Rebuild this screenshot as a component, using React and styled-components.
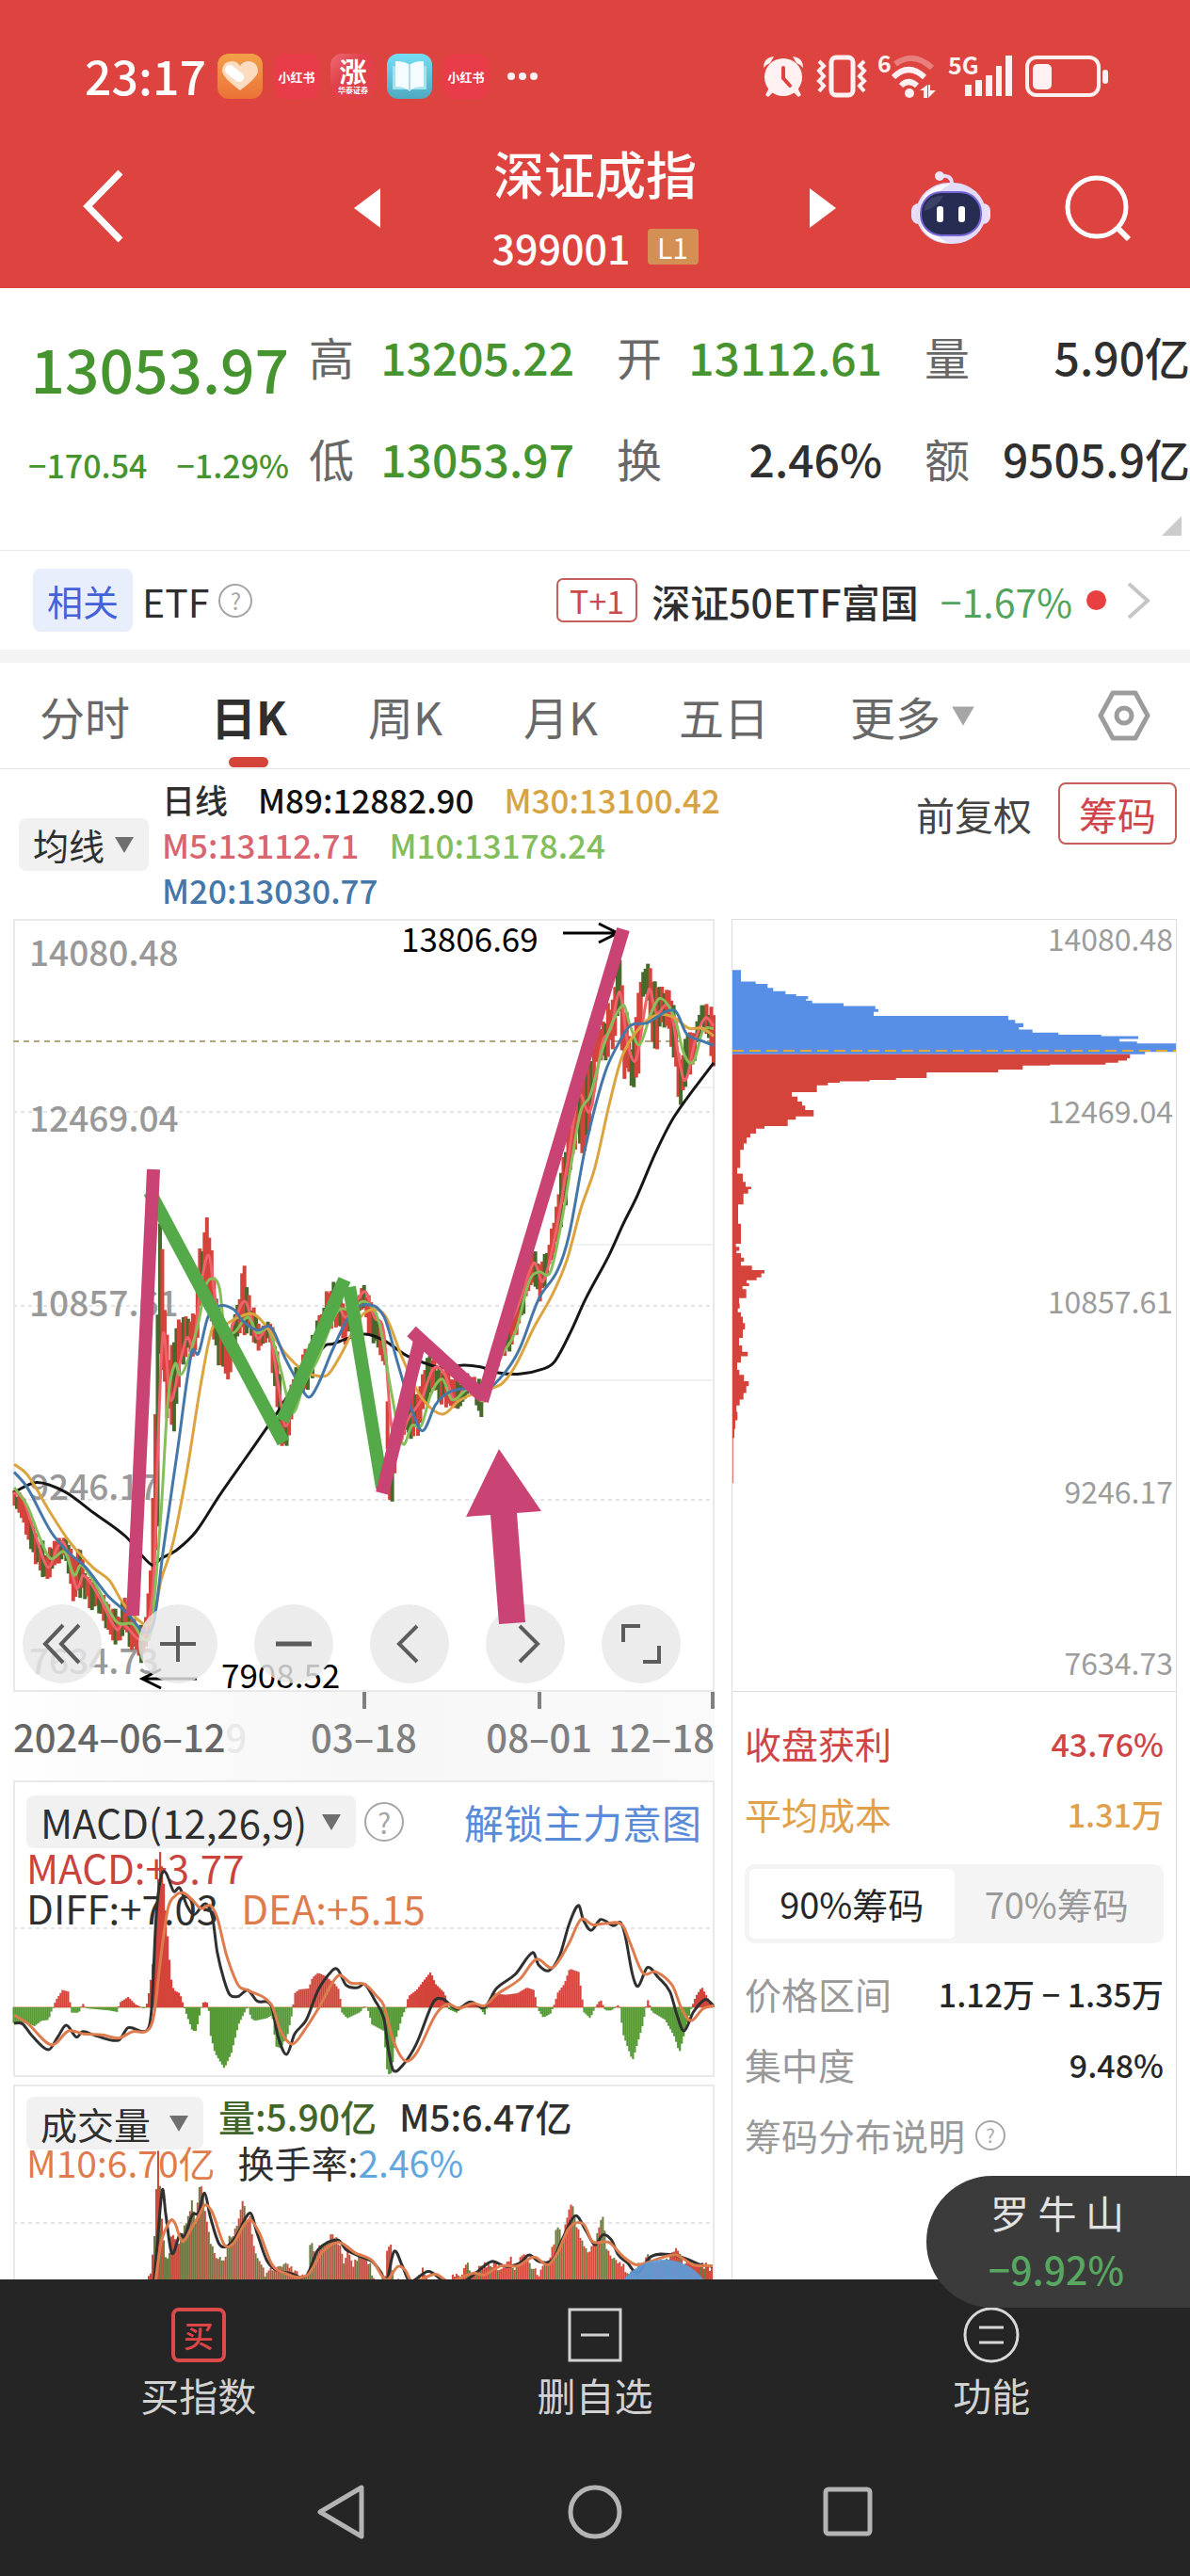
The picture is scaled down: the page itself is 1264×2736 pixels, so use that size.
import { useState } from "react";
import styled, { createGlobalStyle } from "styled-components";

const GlobalStyle = createGlobalStyle`
  * { box-sizing: border-box; }
  body {
    margin: 0;
    background: #fff;
    color: #2f2f2f;
    font-family: "Noto Sans CJK SC", "Noto Sans", sans-serif;
  }
  button, select {
    margin: 0;
    padding: 0;
    border: 0;
    background: none;
    color: inherit;
    font: inherit;
    cursor: pointer;
  }
  a { text-decoration: none; color: inherit; }
  svg { display: block; flex: none; overflow: visible; }
  dl, dt, dd, h1, p { margin: 0; }
`;

const Page = styled.div`
  display: flex;
  flex-direction: column;
  min-height: 100vh;
`;

/* header */

const Header = styled.header`
  background: #dd433f;
  color: #fff;
`;

const StatusBar = styled.div`
  display: flex;
  align-items: center;
  justify-content: space-between;
  height: 136px;
  padding: 26px 86px 0 90px;
`;

const StatusGroup = styled.div`
  display: flex;
  align-items: center;
  gap: ${(props) => props.gap}px;
`;

const Clock = styled.span`
  font-size: 50px;
  line-height: 52px;
  font-weight: 500;
  padding-bottom: 4px;
`;

const AppIcon = styled.span`
  display: flex;
  flex-direction: column;
  align-items: center;
  justify-content: center;
  width: 48px;
  height: 48px;
  border-radius: 12px;
  background: ${(props) => props.bg};
  font-size: ${(props) => props.size || 13}px;
  line-height: 1;
  font-weight: 700;
  white-space: nowrap;
`;

const Tiny = styled.small`
  font-size: 8px;
  line-height: 12px;
`;

const TitleBar = styled.div`
  display: grid;
  grid-template-columns: 1fr 512px 1fr;
  align-items: center;
  height: 170px;
`;

const BackButton = styled.button`
  justify-self: start;
  margin-left: 88px;
`;

const TitleGroup = styled.div`
  display: flex;
  align-items: center;
  justify-content: space-between;
`;

const TitleText = styled.div`
  text-align: center;
`;

const Title = styled.h1`
  font-size: 54px;
  line-height: 60px;
  font-weight: 500;
`;

const Code = styled.p`
  display: flex;
  align-items: center;
  justify-content: space-between;
  gap: 18px;
  margin-top: 22px;
  font-size: 43px;
  line-height: 52px;
  font-weight: 500;
`;

const Level = styled.span`
  width: 54px;
  border-radius: 4px;
  background: #d48f55;
  font-size: 30px;
  line-height: 38px;
  font-weight: 400;
  text-align: center;
`;

const HeaderTools = styled.div`
  display: flex;
  align-items: center;
  justify-content: flex-end;
  gap: 76px;
  padding-right: 60px;
`;

/* quote */

const Quote = styled.section`
  position: relative;
  display: grid;
  grid-template-columns: 310px 1fr;
  gap: 18px;
  height: 279px;
  border-bottom: 1px solid #e9e9e9;
`;

const Last = styled.div`
  padding: 44px 3px 0 30px;
  color: #46942f;
`;

const Price = styled.div`
  font-size: 64px;
  line-height: 80px;
  font-weight: 500;
  text-align: right;
`;

const Change = styled.div`
  display: flex;
  justify-content: space-between;
  margin-top: 36px;
  font-size: 34px;
  line-height: 56px;
  font-weight: 500;
`;

const Figures = styled.dl`
  display: grid;
  grid-template-columns: repeat(3, 1fr);
  grid-auto-rows: 108px;
  column-gap: 45px;
  padding-top: 18px;
`;

const Figure = styled.div`
  display: flex;
  align-items: center;
  justify-content: space-between;
  font-size: 48px;
  line-height: 60px;
  white-space: nowrap;
  dt { color: #686868; }
  dd {
    font-weight: 500;
    color: ${(props) => (props.down ? "#46942f" : "#2f2f2f")};
  }
`;

const Corner = styled.span`
  position: absolute;
  right: 9px;
  bottom: 15px;
  border-left: 21px solid transparent;
  border-bottom: 21px solid #ccc;
`;

const Related = styled.section`
  display: flex;
  align-items: center;
  justify-content: space-between;
  height: 105px;
  padding: 0 42px 0 35px;
  font-size: 41px;
  line-height: 50px;
`;

const Inline = styled.div`
  display: flex;
  align-items: ${(props) => props.align || "center"};
  gap: ${(props) => props.gap}px;
`;

const RelatedTag = styled.span`
  padding: 0 15px;
  border-radius: 8px;
  background: #e9eefd;
  color: #4462d8;
  font-size: 38px;
  line-height: 67px;
`;

const HelpButton = styled.button`
  flex: none;
  width: ${(props) => props.size}px;
  height: ${(props) => props.size}px;
  border: 2px solid #a6a6a6;
  border-radius: 50%;
  color: #a6a6a6;
  font-size: ${(props) => props.size - 12}px;
  line-height: ${(props) => props.size - 6}px;
  text-align: center;
`;

const FundLink = styled.a`
  display: flex;
  align-items: center;
  gap: 15px;
  font-weight: 500;
`;

const Settle = styled.span`
  padding: 0 12px;
  border: 2px solid #c4605c;
  border-radius: 7px;
  color: #cc4a4a;
  font-size: 34px;
  line-height: 43px;
  font-weight: 400;
`;

const FundChange = styled.span`
  margin-left: 8px;
  color: #52a35d;
  font-weight: 400;
`;

const Dot = styled.span`
  width: 21px;
  height: 21px;
  margin-right: 6px;
  border-radius: 50%;
  background: #e84040;
`;

/* periods */

const Periods = styled.nav`
  display: flex;
  align-items: center;
  gap: 86px;
  height: 127px;
  padding: 0 42px;
  border-top: 14px solid #f4f4f4;
  border-bottom: 1px solid #e4e4e4;
  color: #686868;
  font-size: 48px;
  line-height: 110px;
`;

const Period = styled.button`
  position: relative;
  color: ${(props) => (props.active ? "#2f2f2f" : "#686868")};
  font-weight: ${(props) => (props.active ? 700 : 400)};
  &::after {
    content: "";
    position: absolute;
    left: 50%;
    bottom: 0;
    width: 42px;
    height: 11px;
    margin-left: -21px;
    border-radius: 6px;
    background: ${(props) => (props.active ? "#d4443b" : "none")};
  }
`;

const PickerBox = styled.label`
  display: inline-flex;
  align-items: center;
  flex: none;
  gap: ${(props) => props.gap || 9}px;
  padding: 0 ${(props) => (props.plain ? 0 : 15)}px;
  border-radius: 8px;
  background: ${(props) => (props.plain ? "none" : "#f1f1f1")};
  color: ${(props) => (props.plain ? "#686868" : "#2f2f2f")};
  select {
    appearance: none;
    outline: none;
    line-height: 56px;
  }
`;

const Push = styled.button`
  margin-left: auto;
`;

/* averages */

const Averages = styled.section`
  display: flex;
  align-items: center;
  height: 159px;
  padding: 0 14px 0 20px;
  font-size: 38px;
`;

const AverageList = styled.div`
  display: flex;
  flex-wrap: wrap;
  column-gap: 32px;
  width: 640px;
  padding-left: 14px;
  font-size: 35px;
  line-height: 48px;
  font-weight: 500;
`;

const Tint = styled.span`
  color: ${(props) => props.color};
  white-space: nowrap;
`;

const AverageTools = styled.div`
  display: flex;
  align-items: center;
  align-self: flex-start;
  gap: 28px;
  margin: 14px 0 0 auto;
  color: #444;
  font-size: 41px;
  line-height: 62px;
  white-space: nowrap;
`;

const ChipButton = styled.button`
  width: 126px;
  border: 2px solid #c4605c;
  border-radius: 8px;
  color: #d0454a;
`;

/* charts */

const Charts = styled.main`
  display: grid;
  flex: 1;
  grid-template-columns: 745fr 473fr;
  gap: 18px;
  padding: 0 14px;
`;

const Column = styled.div`
  display: flex;
  flex-direction: column;
  min-width: 0;
`;

const Panel = styled.section`
  position: relative;
  border: 2px solid #e9e9e9;
`;

const Drawing = styled.svg`
  width: 100%;
  height: auto;
`;

const Overlay = styled.svg`
  position: absolute;
  top: 0;
  left: 0;
  width: 100%;
  height: auto;
  pointer-events: none;
`;

const ChartTools = styled.div`
  position: absolute;
  left: 8px;
  right: 34px;
  bottom: 7px;
  display: flex;
  justify-content: space-between;
`;

const ToolButton = styled.button`
  display: flex;
  align-items: center;
  justify-content: center;
  width: 84px;
  height: 84px;
  border-radius: 50%;
  background: rgba(232, 232, 232, 0.82);
`;

const Dates = styled.div`
  display: grid;
  grid-template-columns: 3fr 2fr 2fr minmax(0, 1fr);
  align-items: end;
  justify-items: center;
  height: 94px;
  padding-bottom: 18px;
  background: linear-gradient(90deg, #fefefe, #f7f7f7 50%, #fafafa);
  color: #808080;
  font-size: 40px;
  line-height: 58px;
  font-weight: 500;
  white-space: nowrap;
`;

const DateMark = styled.span`
  position: relative;
  justify-self: ${(props) => props.side || "center"};
  color: ${(props) => props.color || "inherit"};
  &::before {
    content: "";
    position: absolute;
    top: -18px;
    left: ${(props) => (props.side === "end" ? "calc(100% - 4px)" : "calc(50% - 2px)")};
    width: 4px;
    height: 18px;
    background: ${(props) => (props.side === "start" ? "none" : "#808080")};
  }
`;

const Ghost = styled.span`
  position: absolute;
  color: #e9e9e9;
`;

const MacdPanel = styled(Panel)`
  height: 315px;
  padding: 11px 12px;
  font-size: 42px;
`;

const VolumePanel = styled(Panel)`
  flex: 1 0 206px;
  margin-top: 8px;
  padding: 11px 12px;
  border-bottom: 0;
  overflow: hidden;
  font-size: 39px;
`;

const Readout = styled.div`
  display: flex;
  gap: 24px;
  height: ${(props) => props.height}px;
  line-height: ${(props) => props.height}px;
  font-weight: ${(props) => props.weight || 500};
  white-space: nowrap;
`;

const Unlock = styled.a`
  margin-left: auto;
  color: #5a8bd8;
`;

const ChipPanel = styled(Column)`
  border: 1px solid #ddd;
  border-bottom: 0;
`;

const ChipInfo = styled.dl`
  padding: 17px 13px 0;
  border-top: 1px solid #ddd;
  font-size: 39px;
  line-height: 75px;
`;

const ChipRow = styled.div`
  display: flex;
  align-items: center;
  justify-content: space-between;
  color: ${(props) => props.color || "#999"};
  dd {
    color: ${(props) => props.color || "#262626"};
    font-size: 34px;
    font-weight: 500;
    white-space: pre;
  }
`;

const Segments = styled.div`
  display: grid;
  grid-template-columns: 1fr 1fr;
  margin: 16px 0;
  padding: 5px;
  border-radius: 10px;
  background: #f4f4f4;
  font-size: 38px;
  line-height: 74px;
`;

const Segment = styled.button`
  border-radius: 6px;
  background: ${(props) => (props.active ? "#fff" : "none")};
  color: ${(props) => (props.active ? "#262626" : "#999")};
`;

const ChipNote = styled.div`
  display: flex;
  align-items: center;
  gap: 11px;
  color: #999;
`;

/* footer */

const Footer = styled.footer`
  position: relative;
  height: 315px;
  background: #252525;
  color: #d2d2d2;
`;

const Actions = styled.div`
  display: grid;
  grid-template-columns: repeat(3, 1fr);
  height: 191px;
  padding-top: 30px;
`;

const Action = styled.button`
  display: flex;
  flex-direction: column;
  align-items: center;
  gap: 5px;
  font-size: 41px;
  line-height: 58px;
`;

const BuyMark = styled.span`
  width: 58px;
  height: 58px;
  border: 4px solid #dc4b4b;
  border-radius: 8px;
  color: #e04545;
  font-size: 32px;
  line-height: 48px;
  font-weight: 500;
  text-align: center;
`;

const SystemNav = styled.div`
  display: flex;
  align-items: center;
  justify-content: center;
  gap: 211px;
  height: 112px;
`;

const Ticker = styled.a`
  position: absolute;
  top: -110px;
  right: 0;
  width: 280px;
  height: 140px;
  padding: 8px 70px 0 0;
  border-radius: 70px 0 0 70px;
  background: #3b3b3b;
  color: #e2e2e2;
  font-size: 41px;
  line-height: 60px;
  text-align: right;
  white-space: nowrap;
`;

const TickerName = styled.span`
  display: flex;
  justify-content: space-between;
  padding-left: 68px;
`;

const TickerChange = styled.span`
  color: #58a660;
  font-weight: 500;
`;

/* chart data, in the units of each plot */

const averages = [
  ["#161616", "30,1140 80,1120 140,1138 200,1178 270,1225 325,1280 345,1268 380,1250 420,1215 470,1145 520,1080 570,1015 600,975 640,915 695,855 710,852 740,842 780,833 820,845 870,875 920,893 945,898 990,893 1030,897 1060,907 1110,910 1160,900 1185,885 1220,825 1250,765 1300,680 1330,620 1360,565 1400,480 1440,410 1523,307"],
  ["#f0616b", "30,1140 50,1150 80,1230 105,1285 125,1245 140,1240 165,1325 180,1300 215,1345 250,1405 265,1395 300,1425 315,1400 330,1300 340,1010 350,830 365,960 385,890 400,840 415,850 430,740 447,680 460,760 480,850 500,810 525,770 550,840 575,825 595,930 610,1010 630,960 660,880 690,820 715,770 740,800 780,750 800,800 820,830 835,1000 850,1050 870,1000 900,960 925,900 950,910 970,960 1000,930 1030,950 1070,850 1110,770 1140,695 1160,730 1190,620 1215,480 1235,370 1260,400 1285,270 1305,240 1323,170 1340,270 1358,300 1385,165 1400,210 1430,200 1460,340 1485,260 1505,220 1523,235"],
  ["#86bf5a", "32,1130 60,1165 90,1235 110,1268 140,1255 160,1300 175,1280 210,1325 250,1390 285,1395 310,1425 325,1400 345,1180 360,960 375,890 385,912 400,890 425,810 440,740 455,725 470,745 480,820 500,830 530,800 550,830 575,825 600,900 625,985 650,930 680,880 720,790 750,785 780,770 810,810 835,940 860,1045 880,1010 900,1010 920,950 945,920 965,960 1000,940 1035,960 1060,890 1100,830 1130,730 1150,712 1175,712 1200,610 1220,500 1240,400 1260,370 1290,270 1330,195 1345,235 1365,272 1390,210 1410,182 1440,220 1460,290 1480,305 1500,245 1523,240"],
  ["#dba43f", "32,1085 60,1105 110,1180 150,1235 200,1285 235,1310 265,1355 310,1395 330,1380 345,1310 370,1240 400,1100 430,930 455,820 480,815 510,800 545,795 580,830 610,870 650,905 670,912 700,912 730,870 770,800 800,785 825,800 860,880 900,955 945,988 980,962 1020,945 1070,930 1100,895 1140,820 1180,755 1210,690 1240,590 1270,510 1300,390 1330,290 1380,225 1410,213 1440,220 1470,240 1500,240 1523,255"],
  ["#4577a8", "32,1100 60,1130 110,1215 150,1258 185,1285 230,1338 275,1375 310,1410 330,1390 350,1250 380,1060 410,870 425,870 445,800 470,778 500,785 520,808 550,825 580,820 610,880 640,930 660,955 680,930 710,865 745,800 780,775 820,798 850,890 880,980 903,1020 930,970 960,945 1000,938 1040,940 1080,905 1110,860 1150,765 1190,710 1215,640 1250,470 1290,330 1320,270 1345,235 1380,230 1440,205 1465,250 1500,265 1523,273"],
];

const dayRange =
  "30,1140,1165 50,1150,1190 65,1200,1255 100,1255,1320 115,1235,1275 140,1225,1265 155,1270,1345 172,1260,1330 190,1310,1355 215,1330,1375 235,1360,1410 255,1380,1435 265,1340,1400 280,1390,1445 300,1400,1460 312,1380,1440 322,1290,1400 330,1060,1330 336,850,1180 340,560,860 345,680,860 352,830,960 360,880,1000 370,860,1010 380,810,920 400,810,860 415,800,880 425,690,790 440,620,740 450,680,790 460,760,870 475,830,910 485,850,925 500,790,860 520,715,830 530,760,820 548,810,865 560,820,850 575,800,840 588,860,970 600,960,1040 613,980,1050 625,910,970 640,890,940 660,860,930 680,800,860 708,735,810 720,760,810 735,780,845 760,760,800 775,735,780 790,780,840 810,800,870 822,870,900 828,1020,1160 835,1060,1180 845,1000,1040 860,960,1030 890,940,1020 905,900,980 920,870,930 935,900,960 960,910,970 980,930,975 1000,910,940 1025,930,990 1040,900,950 1060,850,890 1080,820,870 1100,770,830 1120,710,770 1138,670,730 1150,700,765 1165,680,720 1185,590,660 1200,500,600 1215,440,520 1230,370,440 1245,350,510 1260,300,400 1270,240,300 1290,230,300 1305,170,270 1320,110,200 1330,200,320 1345,270,350 1360,200,320 1370,130,180 1380,115,190 1395,160,290 1410,160,220 1425,170,240 1440,220,300 1448,320,400 1460,260,340 1480,250,300 1495,190,240 1510,200,260 1523,225,310";

const macdBars =
  "30,1345 60,1345 75,1355 90,1338 105,1335 113,1300 116,1296 120,1275 135,1240 148,1245 152,1290 155,1312 170,1312 178,1282 185,1298 235,1305 252,1310 257,1280 275,1262 290,1285 310,1300 316,1280 322,1220 330,1120 336,950 343,800 350,880 358,1050 366,1200 372,1240 385,1250 395,1298 400,1320 412,1370 420,1370 430,1300 436,1276 446,1282 450,1380 460,1440 480,1490 495,1440 510,1350 520,1320 530,1290 537,1330 545,1338 570,1330 582,1320 590,1420 600,1425 615,1380 625,1310 630,1250 640,1238 660,1235 668,1200 680,1185 695,1195 715,1220 725,1240 730,1310 742,1330 770,1310 778,1292 785,1296 795,1350 820,1370 828,1510 836,1505 845,1400 860,1320 868,1296 872,1260 890,1240 905,1210 920,1182 930,1220 950,1250 957,1300 975,1312 1000,1280 1018,1285 1035,1318 1050,1250 1080,1255 1105,1250 1125,1232 1140,1240 1148,1300 1160,1328 1175,1315 1185,1280 1190,1250 1205,1220 1216,1172 1235,1182 1243,1270 1246,1310 1260,1330 1270,1296 1282,1270 1292,1305 1305,1305 1322,1285 1330,1380 1350,1465 1372,1350 1382,1268 1392,1310 1420,1335 1440,1390 1450,1440 1462,1370 1475,1300 1485,1260 1498,1230 1510,1265 1523,1290";

const diffLine =
  "32,1345 50,1348 70,1385 105,1430 125,1390 143,1352 165,1390 178,1372 205,1385 255,1400 275,1360 315,1368 325,1300 335,1000 345,880 355,865 372,925 385,915 400,970 415,1000 440,965 455,1010 465,1120 480,1210 492,1255 510,1260 530,1240 550,1275 580,1290 595,1390 613,1445 630,1380 655,1335 680,1240 710,1178 722,1175 740,1225 765,1232 780,1222 800,1270 820,1330 830,1430 840,1495 860,1480 890,1410 925,1280 945,1268 975,1300 1005,1278 1035,1295 1060,1235 1100,1190 1138,1120 1150,1160 1172,1178 1195,1130 1215,1030 1235,970 1245,1015 1262,1050 1282,1015 1310,1035 1325,1025 1335,1070 1350,1190 1362,1228 1382,1168 1405,1200 1430,1245 1445,1320 1460,1370 1480,1310 1505,1270 1523,1290";

const deaLine =
  "32,1320 60,1345 112,1415 148,1370 180,1380 220,1383 255,1393 285,1372 315,1370 330,1320 345,1130 360,980 375,940 392,930 410,950 430,980 450,970 465,1010 485,1130 510,1225 530,1240 580,1285 600,1370 625,1412 650,1370 680,1300 722,1195 750,1218 780,1222 805,1260 820,1290 840,1400 865,1465 890,1440 930,1320 955,1285 980,1298 1010,1282 1035,1290 1060,1255 1110,1205 1145,1142 1180,1168 1215,1090 1240,1015 1265,1032 1290,1028 1328,1032 1345,1090 1372,1185 1400,1182 1435,1225 1455,1300 1475,1338 1500,1300 1523,1290";

const volumeBars =
  "318,675 326,620 332,520 336,360 340,258 343,385 348,520 355,600 362,590 370,520 380,560 390,530 400,490 408,455 412,425 418,520 425,405 432,395 440,460 450,560 460,590 480,610 490,545 500,530 512,490 520,430 528,500 535,480 545,590 555,620 570,660 580,640 600,630 617,628 640,660 658,665 664,545 672,590 685,570 706,540 722,548 735,620 742,575 755,620 770,600 790,615 800,675 822,680 828,570 834,550 840,660 860,690 900,660 903,625 915,680 960,680 968,660 985,655 995,620 1010,650 1035,620 1055,625 1075,640 1090,605 1100,640 1118,588 1130,620 1150,650 1175,600 1192,498 1200,560 1212,470 1220,440 1230,500 1240,540 1255,590 1270,560 1286,468 1295,580 1310,600 1330,630 1350,650 1380,600 1400,620 1420,610 1445,580 1460,620 1490,615 1523,640";

const volumeM5 =
  "330,690 338,560 348,410 355,480 368,600 385,545 395,550 412,485 425,480 438,420 450,490 468,570 485,580 505,550 535,480 550,540 570,620 590,650 620,660 655,668 680,590 722,560 740,590 770,610 795,625 815,660 825,690 842,595 860,640 875,685 915,655 950,685 985,690 1020,655 1050,625 1080,640 1110,630 1130,605 1150,625 1180,620 1200,560 1228,488 1250,530 1270,575 1287,545 1305,560 1320,605 1340,630 1360,660 1390,610 1435,605 1470,620 1495,635 1523,640";

const volumeM10 =
  "333,690 345,570 365,503 375,510 390,565 410,525 425,490 440,455 455,480 480,575 500,570 520,520 535,500 555,540 580,630 600,655 655,668 690,595 725,568 760,600 795,622 825,680 850,640 865,650 880,685 930,663 960,685 1010,660 1035,665 1070,638 1105,638 1140,612 1170,635 1190,600 1215,525 1245,512 1265,565 1300,568 1330,610 1360,635 1440,605 1480,635 1523,638";

const chipsAbove =
  "438,80 461,127 466,165 474,183 481,222 487,256 491,294 497,287 500,307 505,407 511,508 517,518 523,503 531,932 539,954 546,980 554,966 559,1009 565,1092 569,1228 572,1346 578,1286 583,1342 587,1466 600,1466 604,1368 609,1368";

const chipsBelow =
  "609,1320 617,1310 622,1282 626,1242 630,1065 632,978 640,900 646,672 657,574 661,490 664,395 667,357 672,322 686,242 695,260 705,275 713,285 722,312 735,255 742,229 755,155 760,128 770,110 778,98 790,89 803,78 840,68 851,86 868,95 878,113 883,103 892,88 914,71 945,71 953,80 994,64 1000,75 1008,66 1013,80 1022,90 1030,80 1038,115 1047,155 1054,145 1062,130 1068,98 1074,106 1080,85 1086,97 1104,74 1115,76 1125,70 1133,80 1142,86 1155,93 1168,86 1185,74 1200,84 1213,102 1222,80 1235,68 1250,75 1260,90 1273,105 1283,97 1297,88 1310,76 1322,66 1335,69 1352,62 1370,59 1388,55 1480,54";

const parse = (text) => text.split(" ").map((p) => p.split(",").map(Number));

const plotX = (x) => (x - 30) * 0.4983;
const priceY = (y) => (y - 28) * 0.548;
const macdY = (y) => (y - 572) / 3;
const volumeY = (y) => (y - 95) / 2.82;
const chipX = (x) => (x - 53) / 3;
const chipY = (y) => (y - 336) / 1.912;

// curve through the key points; the handles stay level in x so it never turns back
const curve = (text, scaleY) => {
  const pts = parse(text).map(([x, y]) => [plotX(x), scaleY(y)]);
  const slope = (i) => {
    const a = pts[Math.max(0, i - 1)];
    const b = pts[Math.min(pts.length - 1, i + 1)];
    return (b[1] - a[1]) / (b[0] - a[0]);
  };
  return pts.reduce((d, [x, y], i) => {
    if (i === 0) return `M${x.toFixed(1)} ${y.toFixed(1)}`;
    const [px, py] = pts[i - 1];
    const h = (x - px) / 3;
    const c1 = (py + slope(i - 1) * h).toFixed(1);
    const c2 = (y - slope(i) * h).toFixed(1);
    return `${d}C${(px + h).toFixed(1)} ${c1} ${(x - h).toFixed(1)} ${c2} ${x.toFixed(1)} ${y.toFixed(1)}`;
  }, "");
};

// linear interpolation over the key points, column by column
const sample = (points, x) => {
  const i = Math.max(1, points.findIndex((p) => p[0] >= x));
  const a = points[i - 1];
  const b = points[i];
  const t = (x - a[0]) / (b[0] - a[0]);
  return a.map((v, k) => v + (b[k] - v) * t);
};

const columns = (text, step) => {
  const points = parse(text);
  const out = [];
  for (let x = points[0][0] + 1; x <= points[points.length - 1][0]; x += step) {
    out.push(sample(points, x));
  }
  return out;
};

const noise = (i) => {
  const v = Math.sin(i * 12.9898) * 43758.5453;
  return v - Math.floor(v);
};

const chipPath = (text) => {
  const points = parse(text);
  let d = `M0 ${chipY(points[0][0]).toFixed(1)}`;
  points.forEach(([y, x], i) => {
    d += `H${chipX(x).toFixed(1)}`;
    if (points[i + 1]) d += `V${chipY(points[i + 1][0]).toFixed(1)}`;
  });
  return d + "H0Z";
};

const Triangle = ({ color = "#6f6f6f", size = 22 }) => (
  <svg width={size} height={size - 4} viewBox="0 0 22 18">
    <path d="M1 1h20L11 18z" fill={color} />
  </svg>
);

const Picker = ({ label, value, ...rest }) => (
  <PickerBox {...rest}>
    <select aria-label={label} defaultValue={value}>
      <option>{value}</option>
    </select>
    <Triangle color={rest.plain ? "#a6a6a6" : "#6f6f6f"} size={rest.plain ? 26 : 22} />
  </PickerBox>
);

const StatusIcons = () => (
  <StatusGroup gap={13}>
    <svg width="44" height="46" viewBox="0 0 44 46" fill="#fff1f1">
      <path d="M1 14Q1 3 12 2L8 9Q3 11 1 14ZM43 14Q43 3 32 2l4 7Q41 11 43 14Z" />
      <path d="M7 35l-4 8 3 2 6-6M37 35l4 8-3 2-6-6" />
      <circle cx="22" cy="24" r="20" />
      <path d="M22 14v11l7 8" fill="none" stroke="#dd433f" strokeWidth="4" strokeLinecap="round" />
    </svg>
    <svg width="54" height="46" viewBox="0 0 54 46" fill="none" stroke="#fff1f1">
      <rect x="16" y="3" width="23" height="40" rx="5" strokeWidth="5" />
      <path d="M3 7l5 5-5 5 5 6-5 5 5 5-5 6M51 7l-5 5 5 5-5 6 5 5-5 5 5 6" strokeWidth="4" />
    </svg>
    <svg width="61" height="48" viewBox="0 0 61 48" fill="none" stroke="#fff1f1" strokeWidth="6">
      <text x="-2" y="20" fontSize="25" fontWeight="700" fill="#fff1f1" stroke="none">6</text>
      <path d="M17 11Q36-3 56 15" opacity=".35" />
      <path d="M15 25Q31 9 48 25M23 34q8-8 17 0" />
      <circle cx="32" cy="42" r="5" fill="#fff1f1" stroke="none" />
      <path d="M43 39h4v8h4V33zM52 33h2v6h6l-8 8z" fill="#fff1f1" stroke="none" />
    </svg>
    <svg width="68" height="46" viewBox="0 0 68 46" fill="#fff1f1">
      <text x="-1" y="21" fontSize="25" fontWeight="700">5G</text>
      <path d="M17 32h7v12h-7zM28 27h7v17h-7zM39 22h7v22h-7zM50 12h6v32h-6zM60 1h7v43h-7z" />
    </svg>
    <svg width="89" height="46" viewBox="0 0 89 46">
      <rect x="2" y="3" width="76" height="40" rx="10" fill="none" stroke="#fff1f1" strokeWidth="4" />
      <rect x="8" y="10" width="20" height="27" rx="5" fill="#fff1f1" />
      <rect x="82" y="16" width="6" height="15" rx="3" fill="#fff1f1" />
    </svg>
  </StatusGroup>
);

const Robot = () => (
  <svg width="84" height="78" viewBox="0 0 84 78">
    <path d="M30 5Q43 3 43 13" fill="none" stroke="#e8dbf8" strokeWidth="4" />
    <circle cx="30" cy="5" r="5" fill="#eee6fc" />
    <rect x="0" y="34" width="84" height="22" rx="8" fill="#eadff8" />
    <rect x="5" y="12" width="74" height="65" rx="35" fill="#e3dcf8" />
    <path d="M8 45Q10 15 42 13 20 24 18 50 21 68 40 76 10 74 8 45" fill="#fbf8ff" />
    <rect x="10" y="22" width="64" height="46" rx="22" fill="#272d52" stroke="#7666d8" strokeWidth="2" />
    <path d="M14 38Q18 26 34 26 28 38 14 42" fill="#4a5075" opacity=".6" />
    <rect x="27" y="37" width="7" height="17" rx="3" fill="#fff" />
    <rect x="50" y="37" width="7" height="17" rx="3" fill="#fff" />
  </svg>
);

const PriceChart = () => {
  const bars = columns(dayRange, 5);
  return (
    <Panel>
      <Drawing viewBox="2 2 741 817">
        <g stroke="#e4e4e4" strokeWidth="2">
          <path d="M0 205H743M0 411H743M0 617H743" strokeDasharray="4 4" />
          <path d="M706 179H743M590 346H743M515 490H743" strokeWidth="1" />
        </g>
        <path d="M0 130H743" stroke="#b3a67c" strokeWidth="2" strokeDasharray="6 5" />
        <g fill="#999" fontSize="37" fontWeight="500">
          <text x="17" y="50">14080.48</text>
          <text x="17" y="226">12469.04</text>
          <text x="17" y="422">10857.61</text>
          <text x="17" y="617">9246.17</text>
          <text x="17" y="802">7634.73</text>
        </g>
        {bars.map(([x, hi, lo], i) => {
          const reach = (lo - hi) * 0.4;
          const top = priceY(hi + (noise(i) - 0.5) * reach);
          const bottom = priceY(lo - (noise(i + 500) - 0.5) * reach);
          return (
            <rect
              key={x}
              x={plotX(x) - 1}
              y={top}
              width="4"
              height={bottom - top}
              fill={noise(i + 90) > 0.42 ? "#d4443b" : "#46692c"}
            />
          );
        })}
        {averages.map(([color, points]) => (
          <path key={color} d={curve(points, priceY)} fill="none" stroke={color} strokeWidth="3" />
        ))}
        <g fill="none" stroke="#000" strokeWidth="3">
          <path d="M584 15H642M622 5l20 10-20 10" />
          <path d="M195 807H137M157 797l-20 10 20 10" />
        </g>
        <g fontSize="35" fill="#000">
          <text x="412" y="35">13806.69</text>
          <text x="221" y="817">7908.52</text>
        </g>
      </Drawing>
      <ChartTools>
        <ToolButton aria-label="最早">
          <svg width="42" height="44" viewBox="0 0 42 44" fill="none" stroke="#5c5c5c" strokeWidth="4">
            <path d="M22 2L3 22l19 20M39 2L20 22l19 20" />
          </svg>
        </ToolButton>
        <ToolButton aria-label="放大">
          <svg width="40" height="40" viewBox="0 0 40 40" stroke="#5c5c5c" strokeWidth="4">
            <path d="M1 20h38M20 1v38" />
          </svg>
        </ToolButton>
        <ToolButton aria-label="缩小">
          <svg width="40" height="40" viewBox="0 0 40 40" stroke="#5c5c5c" strokeWidth="5">
            <path d="M1 20h38" />
          </svg>
        </ToolButton>
        <ToolButton aria-label="前移">
          <svg width="28" height="42" viewBox="0 0 28 42" fill="none" stroke="#5c5c5c" strokeWidth="4">
            <path d="M22 2L3 21l19 19" />
          </svg>
        </ToolButton>
        <ToolButton aria-label="后移">
          <svg width="20" height="42" viewBox="0 0 20 42" fill="none" stroke="#5c5c5c" strokeWidth="4">
            <path d="M4 2l19 19L4 40" />
          </svg>
        </ToolButton>
        <ToolButton aria-label="全屏">
          <svg width="44" height="44" viewBox="0 0 44 44" fill="none" stroke="#5c5c5c" strokeWidth="4">
            <path d="M3 20V3h18M24 41h17V24" />
          </svg>
        </ToolButton>
      </ChartTools>
      <Overlay viewBox="2 2 741 817">
        <g fill="none" strokeWidth="14">
          <path d="M145 290L287 556" stroke="#54a948" />
          <path d="M286 533L352 383" stroke="#54a948" />
          <path d="M357 391L392 604" stroke="#54a948" />
          <path d="M149 266L127 740" stroke="#c94374" />
          <path d="M392 610L432 448" stroke="#c94374" />
          <path d="M423 438L500 508" stroke="#c94374" />
          <path d="M498 512L648 11" stroke="#c94374" />
        </g>
        <path d="M516 563L561 629 535 631 544 747 516 749 507 633 481 635Z" fill="#c94374" />
      </Overlay>
    </Panel>
  );
};

const MacdChart = () => (
  <MacdPanel>
    <Inline gap={9}>
      <Picker label="指标" value="MACD(12,26,9)" gap={14} />
      <HelpButton size={42} aria-label="指标说明">?</HelpButton>
      <Unlock href="#unlock">解锁主力意图</Unlock>
    </Inline>
    <Readout height={36} weight={400}>
      <Tint color="#c9443f">MACD:+3.77</Tint>
    </Readout>
    <Readout height={50} weight={400}>
      <Tint>DIFF:+7.03</Tint>
      <Tint color="#df7c4e">DEA:+5.15</Tint>
    </Readout>
    <Overlay viewBox="2 2 741 311">
      <path d="M0 157H743" stroke="#e4e4e4" strokeWidth="2" strokeDasharray="4 4" />
      <path d="M0 241H743" stroke="#b8843c" strokeWidth="1" />
      {columns(macdBars, 4).map(([x, y]) => (
        <rect
          key={x}
          x={plotX(x) - 1}
          y={Math.min(macdY(y), 241)}
          width="2.2"
          height={Math.abs(macdY(y) - 241)}
          fill={y < 1296 ? "#d4443b" : "#549934"}
        />
      ))}
      <path d={curve(diffLine, macdY)} fill="none" stroke="#303030" strokeWidth="3" />
      <path d={curve(deaLine, macdY)} fill="none" stroke="#df7c4e" strokeWidth="3" />
    </Overlay>
  </MacdPanel>
);

const VolumeChart = () => (
  <VolumePanel>
    <Inline gap={16} align="flex-start">
      <Picker label="指标" value="成交量" gap={18} />
      <Readout height={40}>
        <Tint color="#42652a">量:5.90亿</Tint>
        <Tint>M5:6.47亿</Tint>
      </Readout>
    </Inline>
    <Readout height={26} weight={400}>
      <Tint color="#df7c4e">M10:6.70亿</Tint>
      <span>
        换手率:<Tint color="#62a6de">2.46%</Tint>
      </span>
    </Readout>
    <Overlay viewBox="2 2 741 206">
      <path d="M0 147H743" stroke="#e4e4e4" strokeWidth="2" strokeDasharray="4 4" />
      {columns(volumeBars, 4).map(([x, y], i) => {
        const top = volumeY(y + noise(i) * 22);
        return (
          <rect
            key={x}
            x={plotX(x) - 1}
            y={top}
            width="2"
            height={Math.max(0, 210 - top)}
            fill={noise(i + 40) > 0.36 ? "#cf4a3b" : "#6b7a40"}
          />
        );
      })}
      <path d={curve(volumeM5, volumeY)} fill="none" stroke="#303030" strokeWidth="3" />
      <path d={curve(volumeM10, volumeY)} fill="none" stroke="#df7c4e" strokeWidth="3" />
      <circle cx="691" cy="239" r="53" fill="#5c9bdc" opacity=".9" />
    </Overlay>
  </VolumePanel>
);

const ChipChart = () => (
  <Drawing viewBox="0 0 471 819">
    <path d={chipPath(chipsAbove)} fill="#588fe6" />
    <path d={chipPath(chipsBelow)} fill="#d4443b" />
    <path d="M0 139H471" stroke="#e3a83a" strokeWidth="2" strokeDasharray="12 6" />
    <g fill="#9c9c9c" fontSize="32" textAnchor="end">
      <text x="468" y="33">14080.48</text>
      <text x="468" y="216">12469.04</text>
      <text x="468" y="418">10857.61</text>
      <text x="468" y="620">9246.17</text>
      <text x="468" y="802">7634.73</text>
    </g>
  </Drawing>
);

const figures = [
  ["高", "13205.22", true],
  ["开", "13112.61", true],
  ["量", "5.90亿", false],
  ["低", "13053.97", true],
  ["换", "2.46%", false],
  ["额", "9505.9亿", false],
];

const periods = ["分时", "日K", "周K", "月K", "五日"];

const App = () => {
  const [period, setPeriod] = useState("日K");
  const [chip, setChip] = useState("90%筹码");

  return (
    <Page>
      <GlobalStyle />
      <Header>
        <StatusBar>
          <StatusGroup gap={12}>
            <Clock>23:17</Clock>
            <AppIcon bg="linear-gradient(#f3a04a, #ea7237)">
              <svg width="38" height="32" viewBox="0 0 38 32">
                <path d="M19 31Q0 17 0 10 1 0 10 0 16 0 19 5 22 0 28 0 37 0 38 10 38 17 19 31" fill="#fbdcc0" />
                <path d="M8 9l10 8" stroke="#fff" strokeWidth="10" strokeLinecap="round" />
              </svg>
            </AppIcon>
            <AppIcon bg="#e93c49">小红书</AppIcon>
            <AppIcon bg="linear-gradient(135deg, #ec6c75, #e0414a 40%)" size={29}>
              涨
              <Tiny>华泰证券</Tiny>
            </AppIcon>
            <AppIcon bg="linear-gradient(#74def6, #4fa9c0)">
              <svg width="36" height="33" viewBox="0 0 36 33">
                <path d="M0 5h36v25H0z" fill="#a5e2ee" />
                <path d="M3 0Q14 0 18 4 22 0 33 0V27Q22 27 18 32 14 27 3 27Z" fill="#f5fcff" />
                <path d="M18 4v27" stroke="#b5dcea" strokeWidth="2" />
              </svg>
            </AppIcon>
            <AppIcon bg="#e93c49">小红书</AppIcon>
            <svg width="50" height="8" viewBox="0 0 50 8" fill="#fff1f1">
              <circle cx="12" cy="4" r="4" />
              <circle cx="24" cy="4" r="4" />
              <circle cx="36" cy="4" r="4" />
            </svg>
          </StatusGroup>
          <StatusIcons />
        </StatusBar>
        <TitleBar>
          <BackButton aria-label="返回">
            <svg width="44" height="82" viewBox="0 0 44 82" fill="none" stroke="#fff" strokeWidth="7">
              <path d="M40 3L5 39l35 36" />
            </svg>
          </BackButton>
          <TitleGroup>
            <button aria-label="上一个">
              <svg width="28" height="42" viewBox="0 0 28 42">
                <path d="M28 0v42L0 21z" fill="#fff" />
              </svg>
            </button>
            <TitleText>
              <Title>深证成指</Title>
              <Code>
                399001 <Level>L1</Level>
              </Code>
            </TitleText>
            <button aria-label="下一个">
              <svg width="28" height="42" viewBox="0 0 28 42">
                <path d="M0 0v42l28-21z" fill="#fff" />
              </svg>
            </button>
          </TitleGroup>
          <HeaderTools>
            <button aria-label="助手">
              <Robot />
            </button>
            <button aria-label="搜索">
              <svg width="76" height="72" viewBox="0 0 76 72" fill="none" stroke="#fff" strokeWidth="5">
                <circle cx="37" cy="35" r="31" />
                <path d="M59 57l12 12" strokeWidth="6" />
              </svg>
            </button>
          </HeaderTools>
        </TitleBar>
      </Header>

      <Quote>
        <Last>
          <Price>13053.97</Price>
          <Change>
            <span>−170.54</span>
            <span>−1.29%</span>
          </Change>
        </Last>
        <Figures>
          {figures.map(([label, value, down]) => (
            <Figure key={label} down={down ? 1 : 0}>
              <dt>{label}</dt>
              <dd>{value}</dd>
            </Figure>
          ))}
        </Figures>
        <Corner />
      </Quote>

      <Related>
        <Inline gap={10}>
          <RelatedTag>相关</RelatedTag>
          <span>ETF</span>
          <HelpButton size={36} aria-label="ETF说明">?</HelpButton>
        </Inline>
        <FundLink href="#fund">
          <Settle>T+1</Settle>
          <span>深证50ETF富国</span>
          <FundChange>−1.67%</FundChange>
          <Dot />
          <svg width="26" height="40" viewBox="0 0 26 40" fill="none" stroke="#c6c6c6" strokeWidth="4">
            <path d="M3 2l20 18L3 38" />
          </svg>
        </FundLink>
      </Related>

      <Periods>
        {periods.map((name) => (
          <Period key={name} active={name === period ? 1 : 0} onClick={() => setPeriod(name)}>
            {name}
          </Period>
        ))}
        <Picker label="更多周期" value="更多" plain={1} gap={10} />
        <Push aria-label="设置">
          <svg width="56" height="54" viewBox="0 0 56 54" fill="none" stroke="#9c9c9c" strokeWidth="5" strokeLinejoin="round">
            <path d="M16 3h24L53 27 40 51H16L3 27Z" />
            <circle cx="28" cy="27" r="8" />
          </svg>
        </Push>
      </Periods>

      <Averages>
        <Picker label="主图指标" value="均线" />
        <AverageList>
          <Tint>日线</Tint>
          <Tint color="#111">M89:12882.90</Tint>
          <Tint color="#d8a342">M30:13100.42</Tint>
          <Tint color="#d8656f">M5:13112.71</Tint>
          <Tint color="#83bd5c">M10:13178.24</Tint>
          <Tint color="#4577a8">M20:13030.77</Tint>
        </AverageList>
        <AverageTools>
          <button>前复权</button>
          <ChipButton>筹码</ChipButton>
        </AverageTools>
      </Averages>

      <Charts>
        <Column>
          <PriceChart />
          <Dates>
            <DateMark color="#666" side="start">
              2024–06–12<Ghost>9</Ghost>
            </DateMark>
            <DateMark>03–18</DateMark>
            <DateMark>08–01</DateMark>
            <DateMark side="end">12–18</DateMark>
          </Dates>
          <MacdChart />
          <VolumeChart />
        </Column>
        <ChipPanel>
          <ChipChart />
          <ChipInfo>
            <ChipRow color="#cf4545">
              <dt>收盘获利</dt>
              <dd>43.76%</dd>
            </ChipRow>
            <ChipRow color="#e0a04c">
              <dt>平均成本</dt>
              <dd>1.31万</dd>
            </ChipRow>
            <Segments>
              {["90%筹码", "70%筹码"].map((name) => (
                <Segment key={name} active={name === chip ? 1 : 0} onClick={() => setChip(name)}>
                  {name}
                </Segment>
              ))}
            </Segments>
            <ChipRow>
              <dt>价格区间</dt>
              <dd>1.12万 − 1.35万</dd>
            </ChipRow>
            <ChipRow>
              <dt>集中度</dt>
              <dd>9.48%</dd>
            </ChipRow>
            <ChipNote>
              筹码分布说明
              <HelpButton size={32} aria-label="筹码分布说明">?</HelpButton>
            </ChipNote>
          </ChipInfo>
        </ChipPanel>
      </Charts>

      <Footer>
        <Actions>
          <Action>
            <BuyMark>买</BuyMark>
            买指数
          </Action>
          <Action>
            <svg width="58" height="58" viewBox="0 0 58 58" fill="none" stroke="#d2d2d2" strokeWidth="3">
              <path d="M2 2h54v54H2zM14 29h30" />
            </svg>
            删自选
          </Action>
          <Action>
            <svg width="60" height="58" viewBox="0 0 60 58" fill="none" stroke="#d8d8d8" strokeWidth="3">
              <circle cx="30" cy="29" r="28" />
              <path d="M17 21h26M17 37h26" />
            </svg>
            功能
          </Action>
        </Actions>
        <SystemNav>
          <button aria-label="返回">
            <svg width="58" height="58" viewBox="0 0 58 58" fill="none" stroke="#b4b4b4" strokeWidth="5" strokeLinejoin="round">
              <path d="M50 3v52L6 29Z" />
            </svg>
          </button>
          <button aria-label="主页">
            <svg width="58" height="58" viewBox="0 0 58 58" fill="none" stroke="#b4b4b4" strokeWidth="5">
              <circle cx="29" cy="29" r="26" />
            </svg>
          </button>
          <button aria-label="最近任务">
            <svg width="58" height="58" viewBox="0 0 58 58" fill="none" stroke="#b4b4b4" strokeWidth="5">
              <rect x="5" y="5" width="47" height="47" rx="3" />
            </svg>
          </button>
        </SystemNav>
        <Ticker href="#ticker">
          <TickerName>
            <span>罗</span>
            <span>牛</span>
            <span>山</span>
          </TickerName>
          <TickerChange>−9.92%</TickerChange>
        </Ticker>
      </Footer>
    </Page>
  );
};

export default App;
